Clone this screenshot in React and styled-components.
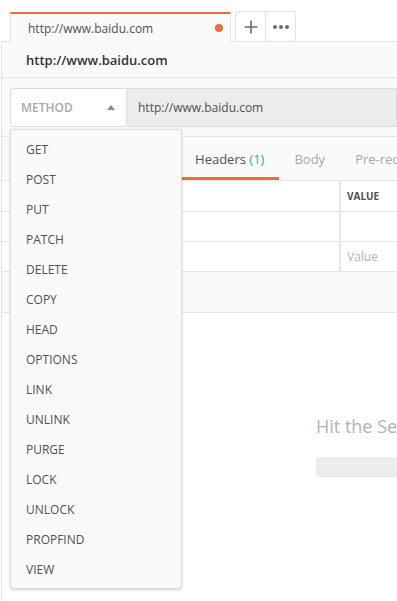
import React from "react";
import styled, { createGlobalStyle } from "styled-components";

const methods = [
  "GET",
  "POST",
  "PUT",
  "PATCH",
  "DELETE",
  "COPY",
  "HEAD",
  "OPTIONS",
  "LINK",
  "UNLINK",
  "PURGE",
  "LOCK",
  "UNLOCK",
  "PROPFIND",
  "VIEW",
];

const requestTabs = [
  { title: "Params" },
  { title: "Authorization" },
  { title: "Headers", count: 1, active: true },
  { title: "Body" },
  { title: "Pre-request Script" },
  { title: "Tests" },
];

const App = () => {
  return (
    <Page>
      <GlobalStyle />
      <TabBar>
        <RequestTab>
          <TabLabel>http://www.baidu.com</TabLabel>
          <UnsavedDot />
        </RequestTab>
        <TabActions>
          <TabAction>
            <svg width="14" height="14" viewBox="0 0 14 14">
              <path d="M7 0.5v13M0.5 7h13" stroke="#6b6b6b" strokeWidth="1.6" />
            </svg>
          </TabAction>
          <TabAction>
            <svg width="18" height="6" viewBox="0 0 18 6">
              <circle cx="3" cy="3" r="2" fill="#6b6b6b" />
              <circle cx="9" cy="3" r="2" fill="#6b6b6b" />
              <circle cx="15" cy="3" r="2" fill="#6b6b6b" />
            </svg>
          </TabAction>
        </TabActions>
      </TabBar>

      <Workspace>
        <TitleRow>http://www.baidu.com</TitleRow>

        <RequestBar>
          <MethodSelect>
            <MethodText>METHOD</MethodText>
            <Caret />
          </MethodSelect>
          <UrlInput>http://www.baidu.com</UrlInput>
        </RequestBar>

        <TabsRow>
          {requestTabs.map((tab) => (
            <SubTab key={tab.title} active={tab.active}>
              {tab.title}
              {tab.count !== undefined && <Count> ({tab.count})</Count>}
            </SubTab>
          ))}
        </TabsRow>

        <Table>
          <Row head>
            <KeyCell />
            <ValueCell>
              <HeadLabel>VALUE</HeadLabel>
            </ValueCell>
          </Row>
          <Row>
            <KeyCell />
            <ValueCell />
          </Row>
          <Row>
            <KeyCell />
            <ValueCell>
              <Placeholder>Value</Placeholder>
            </ValueCell>
          </Row>
        </Table>
        <Band />

        <Response>
          <EmptyText>Hit the Send button to get a response.</EmptyText>
          <EmptyBar />
        </Response>
      </Workspace>

      <Dropdown>
        {methods.map((m) => (
          <DropdownItem key={m}>{m}</DropdownItem>
        ))}
      </Dropdown>
    </Page>
  );
};

export default App;

const GlobalStyle = createGlobalStyle`
  html, body {
    margin: 0;
    padding: 0;
    background: #ffffff;
    overflow: hidden;
  }
  body {
    font-family: "Open Sans", "Noto Sans", sans-serif;
  }
`;

const Page = styled.div`
  position: relative;
  width: 397px;
  height: 601px;
  overflow: hidden;
  display: flex;
  flex-direction: column;
  color: #505050;
`;

const TabBar = styled.div`
  height: 41px;
  flex-shrink: 0;
  display: flex;
  align-items: flex-end;
  padding-left: 10px;
  border-bottom: 1px solid #e6e6e6;
  background: #ffffff;
`;

const RequestTab = styled.div`
  width: 195px;
  height: 28px;
  margin-bottom: -1px;
  display: flex;
  align-items: center;
  justify-content: space-between;
  padding: 0 7px 0 17px;
  border-top: 2px solid #f26b3a;
  border-left: 1px solid #e3e3e3;
  border-right: 1px solid #e3e3e3;
  background: #fafafa;
`;

const TabLabel = styled.span`
  font-size: 12px;
  color: #505050;
`;

const UnsavedDot = styled.span`
  width: 8px;
  height: 8px;
  border-radius: 50%;
  background: #f26b3a;
`;

const TabActions = styled.div`
  display: flex;
  margin-left: 4px;
  height: 29px;
  border: 1px solid #e3e3e3;
  border-bottom: none;
  border-radius: 3px 3px 0 0;
  background: #ffffff;
`;

const TabAction = styled.div`
  width: 29px;
  display: flex;
  align-items: center;
  justify-content: center;
  & + & {
    border-left: 1px solid #e3e3e3;
  }
`;

const Workspace = styled.div`
  flex: 1;
  display: flex;
  flex-direction: column;
  margin-left: 1px;
  border-left: 1px solid #e3e3e3;
  background: #fafafa;
`;

const TitleRow = styled.div`
  height: 35px;
  display: flex;
  align-items: center;
  padding-left: 24px;
  font-size: 13px;
  font-weight: 600;
  color: #333333;
  border-bottom: 1px solid #e6e6e6;
`;

const RequestBar = styled.div`
  display: flex;
  padding: 10px 0 9px 8px;
  border-bottom: 1px solid #e6e6e6;
`;

const MethodSelect = styled.div`
  width: 94px;
  height: 37px;
  display: flex;
  align-items: center;
  justify-content: space-between;
  padding: 0 11px 0 10px;
  background: #ffffff;
  border: 1px solid #dcdcdc;
  border-radius: 3px 0 0 3px;
`;

const MethodText = styled.span`
  font-size: 12px;
  font-weight: 600;
  color: #a8a8a8;
`;

const Caret = styled.span`
  width: 0;
  height: 0;
  border-left: 4px solid transparent;
  border-right: 4px solid transparent;
  border-bottom: 5px solid #8a8a8a;
`;

const UrlInput = styled.div`
  flex: 1;
  height: 37px;
  display: flex;
  align-items: center;
  padding-left: 11px;
  font-size: 12px;
  color: #505050;
  background: #ececec;
  border: 1px solid #dcdcdc;
  border-left: none;
`;

const TabsRow = styled.div`
  height: 43px;
  display: flex;
  margin-left: -6px;
  white-space: nowrap;
`;

const SubTab = styled.div`
  display: flex;
  align-items: center;
  padding: 3px 15px 0;
  font-size: 13px;
  color: ${(props) => (props.active ? "#505050" : "#a8a8a8")};
  border-bottom: 3px solid
    ${(props) => (props.active ? "#f26b3a" : "transparent")};
  &:first-child {
    padding-right: 11px;
  }
`;

const Count = styled.span`
  color: #26b47f;
  white-space: pre;
`;

const Table = styled.div`
  background: #ffffff;
  border-top: 1px solid #e6e6e6;
`;

const Row = styled.div`
  display: grid;
  grid-template-columns: 339px 1fr;
  height: ${(props) => (props.head ? "30px" : "29px")};
  border-bottom: 1px solid #e6e6e6;
`;

const KeyCell = styled.div`
  border-right: 2px solid #e6e6e6;
`;

const ValueCell = styled.div`
  display: flex;
  align-items: center;
  padding-left: 6px;
`;

const HeadLabel = styled.span`
  font-size: 10px;
  font-weight: 700;
  color: #505050;
`;

const Placeholder = styled.span`
  font-size: 12px;
  color: #b3b3b3;
`;

const Band = styled.div`
  height: 40px;
  background: #fafafa;
  border-bottom: 1px solid #e6e6e6;
`;

const Response = styled.div`
  flex: 1;
  background: #ffffff;
  padding: 101px 0 0 314px;
  white-space: nowrap;
`;

const EmptyText = styled.div`
  font-size: 18px;
  color: #b3b3b3;
  line-height: 24px;
`;

const EmptyBar = styled.div`
  width: 240px;
  height: 20px;
  margin-top: 19px;
  border-radius: 3px;
  background: #ececec;
`;

const Dropdown = styled.ul`
  position: absolute;
  left: 10px;
  top: 129px;
  width: 170px;
  margin: 0;
  padding: 4px 0;
  list-style: none;
  background: #fafafa;
  border: 1px solid #dcdcdc;
  border-radius: 3px;
  box-shadow: 0 1px 3px rgba(0, 0, 0, 0.18);
`;

const DropdownItem = styled.li`
  height: 30px;
  display: flex;
  align-items: center;
  padding-left: 15px;
  font-size: 12px;
  color: #505050;
`;
